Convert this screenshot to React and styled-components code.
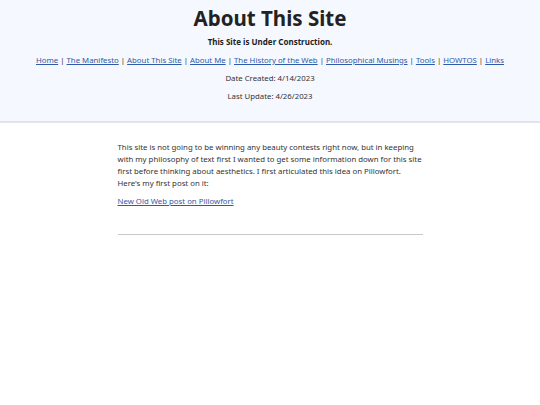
import React from 'react';
import styled, { createGlobalStyle } from 'styled-components';

const GlobalStyle = createGlobalStyle`
  body {
    margin: 0;
    background: #ffffff;
    font-family: "Noto Sans", "Open Sans", sans-serif;
    color: #333333;
  }
`;

const Header = styled.header`
  background: #f5f8ff;
  border-bottom: 2px solid #e2e4ec;
  text-align: center;
  padding: 5px 0 19px;
`;

const Title = styled.h1`
  margin: 0;
  font-size: 20.5px;
  line-height: 26px;
  font-weight: 700;
  color: #222222;
`;

const Subtitle = styled.p`
  margin: 5px 0 0;
  font-size: 8px;
  font-weight: 700;
  line-height: 12px;
  color: #222222;
`;

const Nav = styled.nav`
  margin-top: 6px;
  font-size: 7.8px;
  line-height: 12px;
  color: #333333;
  white-space: nowrap;
`;

const Link = styled.a`
  color: #2f5aa8;
  text-decoration: underline;
`;

const Meta = styled.p`
  margin: 6px 0 0;
  font-size: 7.8px;
  line-height: 12px;
  color: #333333;
`;

const Main = styled.main`
  width: 305px;
  margin: 0 auto;
  padding-top: 18px;
`;

const Para = styled.p`
  margin: 0 0 6px;
  font-size: 7.8px;
  line-height: 12px;
  color: #333333;
`;

const Rule = styled.hr`
  border: none;
  border-top: 1px solid #c8c8c8;
  margin: 27px 0 0;
`;

const links = [
  'Home',
  'The Manifesto',
  'About This Site',
  'About Me',
  'The History of the Web',
  'Philosophical Musings',
  'Tools',
  'HOWTOS',
  'Links',
];

export default function App() {
  return (
    <>
      <GlobalStyle />
      <Header>
        <Title>About This Site</Title>
        <Subtitle>This Site is Under Construction.</Subtitle>
        <Nav>
          {links.map((l, i) => (
            <React.Fragment key={l}>
              {i > 0 && ' | '}
              <Link href="#">{l}</Link>
            </React.Fragment>
          ))}
        </Nav>
        <Meta>Date Created: 4/14/2023</Meta>
        <Meta>Last Update: 4/26/2023</Meta>
      </Header>
      <Main>
        <Para>
          This site is not going to be winning any beauty contests right now, but in keeping
          with my philosophy of text first I wanted to get some information down for this site
          first before thinking about aesthetics. I first articulated this idea on Pillowfort.
          Here's my first post on it:
        </Para>
        <Para>
          <Link href="#">New Old Web post on Pillowfort</Link>
        </Para>
        <Rule />
      </Main>
    </>
  );
}
